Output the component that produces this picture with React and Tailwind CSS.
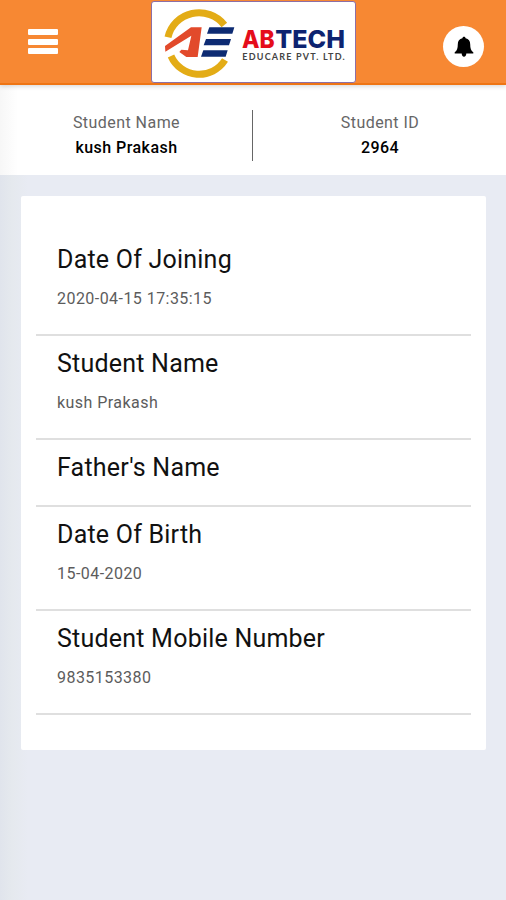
const fields = [
  { label: "Date Of Joining", value: "2020-04-15 17:35:15" },
  { label: "Student Name", value: "kush Prakash" },
  { label: "Father's Name" },
  { label: "Date Of Birth", value: "15-04-2020" },
  { label: "Student Mobile Number", value: "9835153380" },
];

function Logo() {
  return (
    <svg viewBox="21 6 609 240" className="h-20 w-[203px]" aria-label="ABTECH Educare Pvt. Ltd.">
      <g fill="none" stroke="#e3ac16" strokeWidth="21">
        <path d="M69 112A95 92 0 0 1 238 75" />
        <path d="M78 168A92 92 0 0 0 240 180" />
      </g>
      <path fill="#e24a2b" d="M60 138L138 82H170L158 171H124L103 156L109 149L129 151L139 107L61 155Z" />
      <g fill="#0d2b73">
        <path d="M193 82H268L262 101H186Z" />
        <path d="M183 117H258L252 136H176Z" />
        <path d="M175 151H248L242 170H168Z" />
      </g>
      <g fontFamily="Inter, sans-serif" fontWeight="800" fontSize="75">
        <text x="291" y="143" fill="#e50d1b" textLength="98" lengthAdjust="spacingAndGlyphs">AB</text>
        <text x="391" y="143" fill="#0d2370" textLength="209" lengthAdjust="spacingAndGlyphs">TECH</text>
      </g>
      <text x="292" y="181" fill="#444" fontFamily="Lato, sans-serif" fontWeight="700" fontSize="27" textLength="307">
        EDUCARE PVT. LTD.
      </text>
    </svg>
  );
}

function Summary({ label, value, className }) {
  return (
    <div className={`flex flex-col items-center ${className}`}>
      <span className="text-base leading-[25px] tracking-[0.45px] text-[#666]">{label}</span>
      <span className="text-base leading-[25px] font-medium tracking-[0.45px] text-black">{value}</span>
    </div>
  );
}

export default function App() {
  return (
    <div className="flex h-[900px] w-[506px] flex-col overflow-hidden bg-[linear-gradient(to_right,#e0e4ec_0,#e5e9ee_12px,#e8ebf3_28px)] font-[Roboto,sans-serif]">
      <header className="z-10 flex h-[85px] shrink-0 border-b-2 border-[#ef7514] bg-[#f78833] pl-7 shadow-[0_1px_5px_rgba(0,0,0,0.18)]">
        <button className="mt-[29px] flex h-[26px] w-[30px] flex-col gap-[3.5px]" aria-label="Menu">
          <span className="h-1.5 w-full shrink-0 rounded-[1px] bg-white" />
          <span className="h-1.5 w-full shrink-0 rounded-[1px] bg-white" />
          <span className="h-1.5 w-full shrink-0 rounded-[1px] bg-white" />
        </button>
        <div className="mt-px ml-[93px] h-[82px] w-[205px] shrink-0 rounded-[3px] border border-[#8d6fa5] bg-white">
          <Logo />
        </div>
        <button className="mt-[26px] ml-[87px] flex size-[41px] shrink-0 items-center justify-center rounded-full bg-white" aria-label="Notifications">
          <svg viewBox="0 0 20 22" className="h-[22px] w-5">
            <path d="M10 .8C11 .8 11.500 1.500 11.600 2.300C14.600 3 16.200 5.200 16.200 8.200C16.200 12.500 17 14.500 19.300 16.200V17.600H12.300C12.300 19.500 11.400 20.800 10 20.800C8.600 20.800 7.700 19.500 7.700 17.600H.7V16.200C3 14.500 3.800 12.500 3.800 8.200C3.800 5.200 5.400 3 8.400 2.300C8.500 1.500 9 .8 10 .8Z" />
          </svg>
        </button>
      </header>
      <section className="flex h-[90px] shrink-0 bg-[linear-gradient(to_right,#f7f7f7_0,#ffffff_18px)] pt-[25px]">
        <Summary label="Student Name" value="kush Prakash" className="w-[252px] pl-px" />
        <div className="h-[51px] w-px bg-[#666]" />
        <Summary label="Student ID" value="2964" className="w-[253px] pl-px" />
      </section>
      <main className="mt-[21px] ml-[21px] h-[554px] w-[465px] rounded-[2px] bg-white px-[15px] pt-[36px]">
        {fields.map(({ label, value }) => (
          <div
            key={label}
            className={`border-b-2 border-[#dfdfdf] pt-[13px] pl-[21px] ${value ? "h-[104px]" : "h-[67px]"}`}
          >
            <h2 className="text-[25px] leading-[30px] tracking-[0.22px] text-[#111]">{label}</h2>
            {value && <p className="mt-3 text-base leading-6 tracking-[0.45px] text-[#5c5c5c]">{value}</p>}
          </div>
        ))}
      </main>
    </div>
  );
}
